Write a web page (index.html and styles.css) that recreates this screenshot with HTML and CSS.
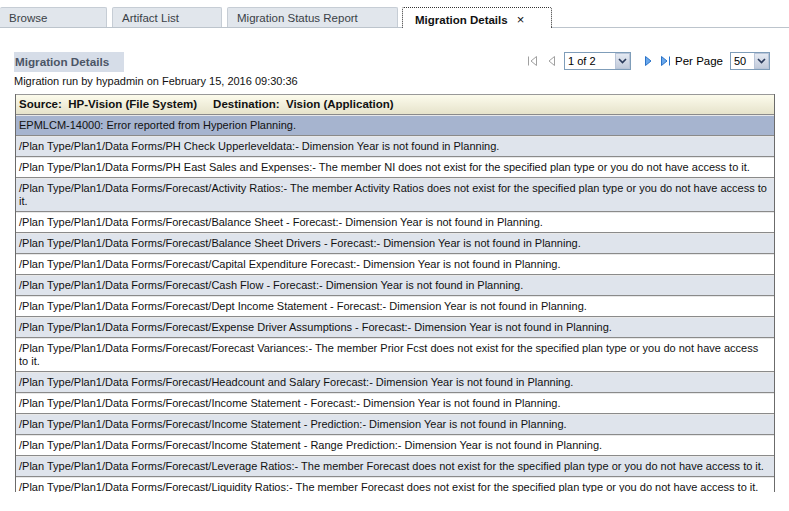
FILE: index.html
```html
<!DOCTYPE html>
<html>
<head>
<meta charset="utf-8">
<link rel="stylesheet" href="styles.css">
</head>
<body>
<div class="tabbar">
  <div class="tab t1">Browse</div>
  <div class="tab t2">Artifact List</div>
  <div class="tab t3">Migration Status Report</div>
  <div class="tab active">Migration Details <span class="close">×</span></div>
</div>
<div class="content">
  <div class="toprow">
    <div class="titlecol">
      <div class="title">Migration Details</div>
      <div class="runby">Migration run by hypadmin on February 15, 2016 09:30:36</div>
    </div>
    <div class="pager">
      <svg class="pi" width="12" height="14" viewBox="0 0 12 14"><path d="M2.5 2.5v9" stroke="#a0a0a0" fill="none"/><path d="M10.5 2.5 5 7l5.5 4.5z" stroke="#a0a0a0" fill="#fff"/></svg>
      <svg class="pi p2" width="10" height="14" viewBox="0 0 10 14"><path d="M7.5 2.5 2 7l5.5 4.5z" stroke="#a0a0a0" fill="#fff"/></svg>
      <div class="sel s1"><span class="val">1 of 2</span><span class="btn"><svg width="9" height="6" viewBox="0 0 9 6"><path d="M1 1l3.5 3.5L8 1" stroke="#2a3a5a" stroke-width="1.6" fill="none"/></svg></span></div>
      <svg class="pi p3" width="10" height="14" viewBox="0 0 10 14"><path d="M2.5 2.5 8 7l-5.5 4.5z" stroke="#2b73c8" fill="#6aa8ec"/></svg>
      <svg class="pi p4" width="12" height="14" viewBox="0 0 12 14"><path d="M1.5 2.5 7 7l-5.5 4.5z" stroke="#2b73c8" fill="#6aa8ec"/><path d="M9.5 2.5v9" stroke="#2b73c8" fill="none"/></svg>
      <span class="pp">Per Page</span>
      <div class="sel s2"><span class="val">50</span><span class="btn"><svg width="9" height="6" viewBox="0 0 9 6"><path d="M1 1l3.5 3.5L8 1" stroke="#2a3a5a" stroke-width="1.6" fill="none"/></svg></span></div>
    </div>
  </div>
  <div class="grid">
    <div class="row head"><b>Source:&nbsp; HP-Vision (File System)</b><b class="dest">Destination:&nbsp; Vision (Application)</b></div>
    <div class="row sel-row">EPMLCM-14000: Error reported from Hyperion Planning.</div>
    <div class="row alt">/Plan Type/Plan1/Data Forms/PH Check Upperleveldata:- Dimension Year is not found in Planning.</div>
    <div class="row">/Plan Type/Plan1/Data Forms/PH East Sales and Expenses:- The member NI does not exist for the specified plan type or you do not have access to it.</div>
    <div class="row alt">/Plan Type/Plan1/Data Forms/Forecast/Activity Ratios:- The member Activity Ratios does not exist for the specified plan type or you do not have access to it.</div>
    <div class="row">/Plan Type/Plan1/Data Forms/Forecast/Balance Sheet - Forecast:- Dimension Year is not found in Planning.</div>
    <div class="row alt">/Plan Type/Plan1/Data Forms/Forecast/Balance Sheet Drivers - Forecast:- Dimension Year is not found in Planning.</div>
    <div class="row">/Plan Type/Plan1/Data Forms/Forecast/Capital Expenditure Forecast:- Dimension Year is not found in Planning.</div>
    <div class="row alt">/Plan Type/Plan1/Data Forms/Forecast/Cash Flow - Forecast:- Dimension Year is not found in Planning.</div>
    <div class="row">/Plan Type/Plan1/Data Forms/Forecast/Dept Income Statement - Forecast:- Dimension Year is not found in Planning.</div>
    <div class="row alt">/Plan Type/Plan1/Data Forms/Forecast/Expense Driver Assumptions - Forecast:- Dimension Year is not found in Planning.</div>
    <div class="row">/Plan Type/Plan1/Data Forms/Forecast/Forecast Variances:- The member Prior Fcst does not exist for the specified plan type or you do not have access to it.</div>
    <div class="row alt">/Plan Type/Plan1/Data Forms/Forecast/Headcount and Salary Forecast:- Dimension Year is not found in Planning.</div>
    <div class="row">/Plan Type/Plan1/Data Forms/Forecast/Income Statement - Forecast:- Dimension Year is not found in Planning.</div>
    <div class="row alt">/Plan Type/Plan1/Data Forms/Forecast/Income Statement - Prediction:- Dimension Year is not found in Planning.</div>
    <div class="row">/Plan Type/Plan1/Data Forms/Forecast/Income Statement - Range Prediction:- Dimension Year is not found in Planning.</div>
    <div class="row alt">/Plan Type/Plan1/Data Forms/Forecast/Leverage Ratios:- The member Forecast does not exist for the specified plan type or you do not have access to it.</div>
    <div class="row">/Plan Type/Plan1/Data Forms/Forecast/Liquidity Ratios:- The member Forecast does not exist for the specified plan type or you do not have access to it.</div>
  </div>
</div>
</body>
</html>
```

FILE: styles.css
```css
html, body {
  margin: 0;
  padding: 0;
  background: #fff;
  overflow: hidden;
  height: 511px;
}
body {
  font-family: "Liberation Sans", Arial, sans-serif;
  font-size: 11px;
  color: #000;
}
.tabbar {
  height: 28px;
  border-bottom: 1px solid #bcc4cc;
  display: flex;
  align-items: flex-end;
  box-sizing: border-box;
}
.tab {
  height: 20px;
  box-sizing: border-box;
  background: #e1e6ec;
  border: 1px solid #c6cdd5;
  border-bottom: none;
  border-radius: 2px 2px 0 0;
  color: #3a3f47;
  font-size: 11.5px;
  padding: 4px 0 0 9px;
}
.t1 { width: 107px; border-left: none; }
.t2 { width: 110px; margin-left: 5px; }
.t3 { width: 171px; margin-left: 5px; }
.active {
  width: 150px;
  margin-left: 4px;
  height: 21px;
  margin-bottom: -1px;
  background: #fff;
  border: 1px dotted #333;
  border-bottom: none;
  font-weight: bold;
  color: #111;
  padding: 4px 0 0 12px;
}
.close {
  font-weight: normal;
  font-size: 13px;
  margin-left: 6px;
}
.content {
  padding: 0 16px 0 14px;
}
.toprow {
  display: flex;
  justify-content: space-between;
  align-items: flex-start;
}
.titlecol {
  padding-top: 24px;
}
.title {
  display: inline-block;
  background: #d6dde8;
  color: #4b5566;
  font-weight: bold;
  padding: 3px 15px 4px 1px;
  height: 13px;
  line-height: 13px;
  font-size: 11.7px;
}
.runby {
  margin-top: 2px;
  line-height: 14px;
  color: #111;
}
.pager {
  display: flex;
  align-items: center;
  padding-top: 24px;
  margin-right: 3px;
}
.pi { display: block; }
.p2 { margin-left: 9px; }
.p3 { margin-left: 12px; }
.p4 { margin-left: 7px; }
.sel {
  display: flex;
  height: 18px;
  box-sizing: border-box;
  border: 1px solid #7f9db9;
  background: #fff;
}
.s1 { width: 67px; margin-left: 7px; }
.s2 { width: 40px; margin-left: 7px; }
.sel .val {
  flex: 1;
  padding: 2px 0 0 3px;
  font-size: 11px;
}
.sel .btn {
  width: 15px;
  background: linear-gradient(#e4e9f2, #c2cbdb);
  border: 1px solid #b9c5d8;
  box-sizing: border-box;
  display: flex;
  align-items: center;
  justify-content: center;
}
.pp {
  margin-left: 3px;
  font-size: 11.5px;
}
.grid {
  margin-top: 6px;
  margin-left: 1px;
  width: 758px;
  height: 398px;
  overflow: hidden;
  border-left: 1px solid #6b6b6b;
  border-right: 1px solid #6b6b6b;
  background: #fff;
}
.row {
  background: #fff;
  padding: 3px 4px 3px 3px;
  line-height: 13px;
  border-bottom: 1px solid #8a8a8a;
  border-top: 1px solid #e8e8e8;
  color: #111;
}
.row.alt { background: #dfe4ec; }
.row.sel-row { background: #a6b4cf; }
.row.head {
  background: linear-gradient(#fcfbec, #e6e3cb);
  border-top: 1px solid #999;
  padding-top: 3px;
  padding-bottom: 3px;
  font-size: 11.5px;
}
.head b { font-weight: bold; }
.head .dest { margin-left: 16px; }
```
